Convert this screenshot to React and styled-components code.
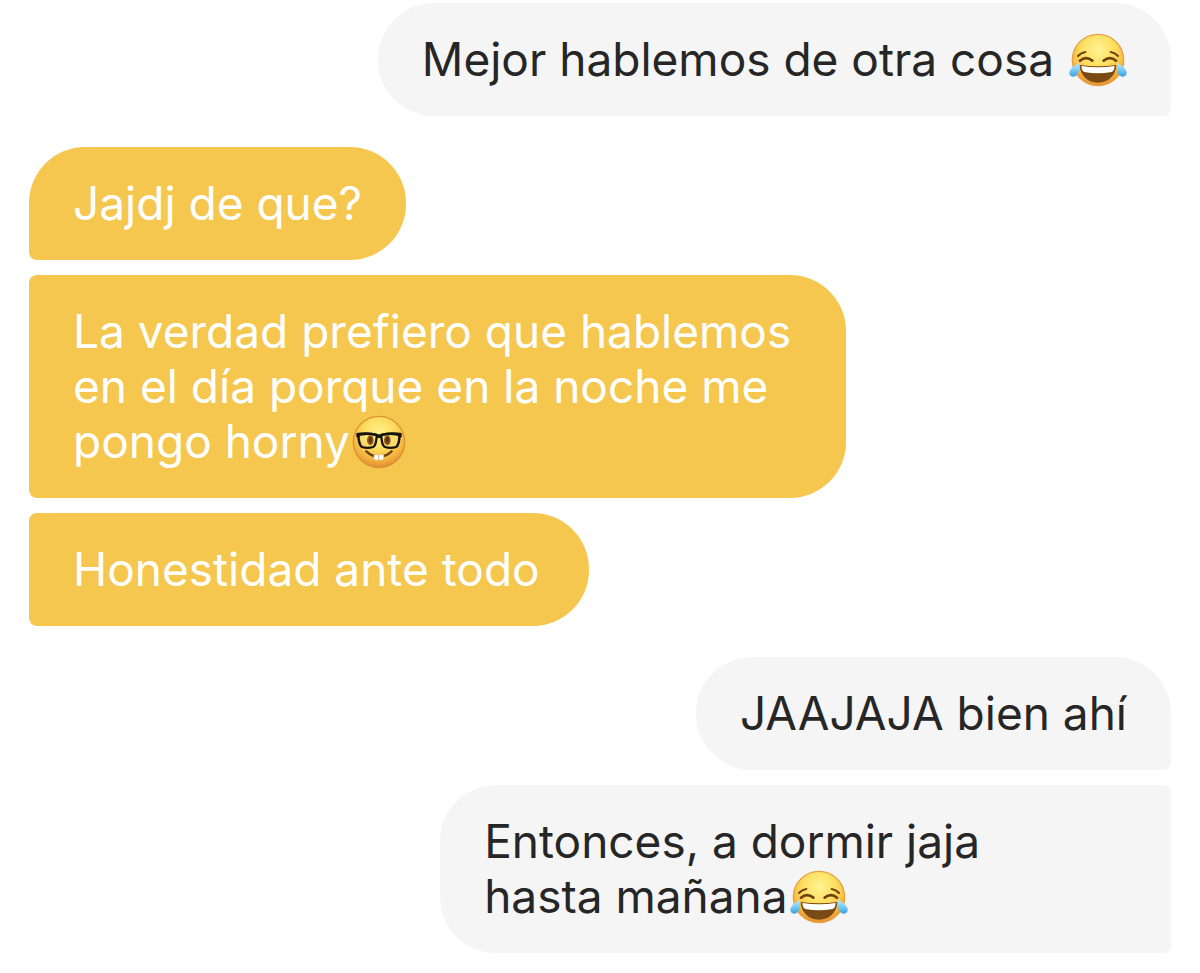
import styled, { createGlobalStyle, css } from "styled-components";

export default function App() {
  return (
    <>
      <GlobalStyle />
      <Thread>
        {groups.map(({ id, side, messages }) => (
          <Group key={id} $side={side}>
            {messages.map(({ id, lines, emoji, share }) => (
              <Bubble key={id} $side={side} $share={share}>
                {lines.map((line, i) => (
                  <Line key={line}>
                    {line}
                    {i === lines.length - 1 && emoji}
                  </Line>
                ))}
              </Bubble>
            ))}
          </Group>
        ))}
      </Thread>
    </>
  );
}

//#region emojis
function Joy({ id }) {
  return (
    <Emoji width="58" height="54" viewBox="0 0 174 162" role="img" aria-label="Cara llorando de risa">
      <defs>
        <radialGradient id={`${id}-face`} cx="50%" cy="30%" r="72%">
          <stop offset="0" stopColor="#fff392" />
          <stop offset="0.45" stopColor="#fcdf60" />
          <stop offset="0.75" stopColor="#f6b940" />
          <stop offset="1" stopColor="#e38a2b" />
        </radialGradient>
        <linearGradient id={`${id}-tear`} x1="0" y1="0" x2="0" y2="1">
          <stop offset="0" stopColor="#c3e9fa" />
          <stop offset="0.5" stopColor="#7ccdf6" />
          <stop offset="1" stopColor="#3a9fe3" />
        </linearGradient>
      </defs>
      <circle cx="87" cy="81" r="77" fill={`url(#${id}-face)`} stroke="#e8a044" strokeWidth="4" />
      <g fill="none" stroke="#70400f" strokeLinecap="round">
        <path d="M27 69Q36 59 49 57" strokeWidth="6" />
        <path d="M147 69Q138 59 125 57" strokeWidth="6" />
        <path d="M33 83Q51 68 70 83" strokeWidth="8" />
        <path d="M104 83Q123 68 141 83" strokeWidth="8" />
      </g>
      <path d="M32 96Q87 104 142 96C141 128 117 149 87 149C57 149 33 128 32 96Z" fill="#7a4a14" />
      <path d="M37 99Q87 107 137 99Q136 114 128 117Q87 125 46 117Q38 114 37 99Z" fill="#fff" />
      <path
        d="M29 88C33 105 30 131 12 131C1 131-2 119 4 110C9 101 20 98 29 88Z"
        fill={`url(#${id}-tear)`}
      />
      <path
        d="M145 88C141 105 144 131 162 131C173 131 176 119 170 110C165 101 154 98 145 88Z"
        fill={`url(#${id}-tear)`}
      />
    </Emoji>
  );
}

function Nerd() {
  return (
    <Emoji width="54" height="54" viewBox="0 0 162 162" role="img" aria-label="Cara con lentes">
      <defs>
        <radialGradient id="nerd-face" cx="50%" cy="32%" r="70%">
          <stop offset="0" stopColor="#fff08a" />
          <stop offset="0.45" stopColor="#fcdc5e" />
          <stop offset="0.75" stopColor="#f4b640" />
          <stop offset="1" stopColor="#dc862e" />
        </radialGradient>
      </defs>
      <circle cx="81" cy="81" r="77" fill="url(#nerd-face)" stroke="#dc9134" strokeWidth="4" />
      <g fill="#fff" fillOpacity="0.1" stroke="#16140f" strokeWidth="7" strokeLinejoin="round">
        <path d="M20 59Q45 54 71 59Q76 61 73 73Q71 92 63 96Q47 101 30 96Q23 92 20 72Z" />
        <path d="M142 59Q117 54 91 59Q86 61 89 73Q91 92 99 96Q115 101 132 96Q139 92 142 72Z" />
      </g>
      <path
        d="M13 54Q45 49 74 56Q81 59 88 56Q117 49 149 54V66L142 70V62Q112 57 91 63L86 70Q81 66 76 70L71 63Q50 57 20 62V70L13 66Z"
        fill="#16140f"
      />
      <ellipse cx="55" cy="76" rx="10" ry="15" fill="#925a1c" />
      <ellipse cx="106" cy="76" rx="10" ry="15" fill="#925a1c" />
      <ellipse cx="55" cy="75" rx="5" ry="9" fill="#5e330a" />
      <ellipse cx="106" cy="75" rx="5" ry="9" fill="#5e330a" />
      <path
        d="M43 109Q60 125 81 125Q102 125 119 109"
        fill="none"
        stroke="#70400f"
        strokeWidth="7"
        strokeLinecap="round"
      />
      <path
        d="M66 120H80V132Q79 135 74 135Q67 135 66 130ZM81 120H95V130Q94 135 87 135Q82 135 81 132Z"
        fill="#fff"
        stroke="#c9c3b8"
      />
    </Emoji>
  );
}
//#endregion

//#region data messages
const groups = [
  {
    id: "g1",
    side: "right",
    messages: [
      { id: "m1", lines: ["Mejor hablemos de otra cosa "], emoji: <Joy id="joy-a" />, share: 69 },
    ],
  },
  {
    id: "g2",
    side: "left",
    messages: [
      { id: "m2", lines: ["Jajdj de que?"], share: 32 },
      {
        id: "m3",
        lines: ["La verdad prefiero que hablemos", "en el día porque en la noche me", "pongo horny"],
        emoji: <Nerd />,
        share: 71.5,
      },
      { id: "m4", lines: ["Honestidad ante todo"], share: 49 },
    ],
  },
  {
    id: "g3",
    side: "right",
    messages: [
      { id: "m5", lines: ["JAAJAJA bien ahí"], share: 41 },
      { id: "m6", lines: ["Entonces, a dormir jaja", "hasta mañana"], emoji: <Joy id="joy-b" />, share: 64 },
    ],
  },
];
//#endregion

//#region Styled components
const GlobalStyle = createGlobalStyle`
  * {
    box-sizing: border-box;
  }
  body {
    margin: 0;
    background: #fff;
    font-family: Inter, "Liberation Sans", sans-serif;
  }
`;

const Thread = styled.main`
  display: flex;
  flex-direction: column;
  gap: 31px;
  padding: 3px 29px 20px;
`;

const Group = styled.section`
  display: flex;
  flex-direction: column;
  align-items: ${({ $side }) => ($side === "left" ? "flex-start" : "flex-end")};
  gap: 15px;
`;

const leftBubble = css`
  background: #f5c74f;
  color: #fff;
  border-radius: 8px 56px 56px 8px;
  &:first-child {
    border-top-left-radius: 56px;
  }
`;

const rightBubble = css`
  background: #f5f5f5;
  color: #262626;
  border-radius: 56px 8px 8px 56px;
  &:first-child {
    border-top-right-radius: 56px;
  }
`;

const Bubble = styled.div`
  min-width: ${({ $share }) => $share}%;
  padding: 29px 44px;
  font-size: 46px;
  line-height: 55px;
  ${({ $side }) => ($side === "left" ? leftBubble : rightBubble)}
`;

const Line = styled.p`
  margin: 0;
  white-space: pre-wrap;
`;

const Emoji = styled.svg`
  display: inline-block;
  vertical-align: -11px;
  margin-left: 2px;
`;
//#endregion
